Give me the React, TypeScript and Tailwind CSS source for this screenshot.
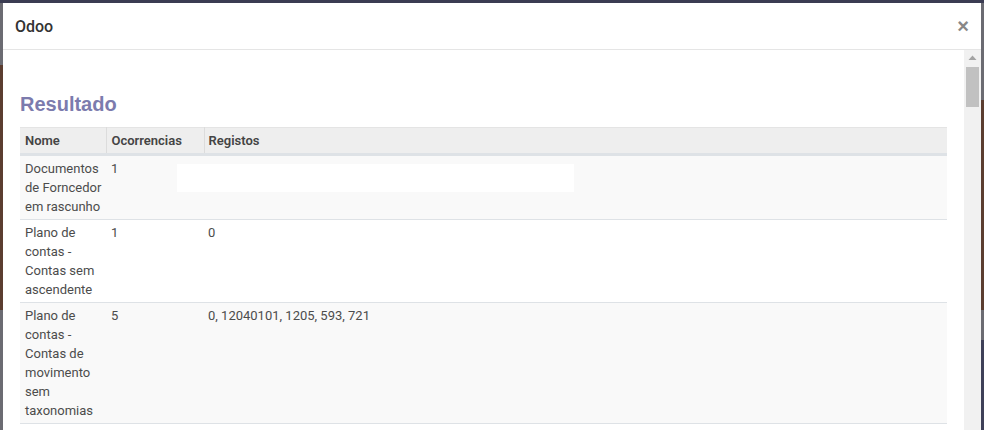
import React from "react";

const rows = [
  { nome: ["Documentos", "de Forncedor", "em rascunho"], oc: "1", reg: "", blank: true },
  { nome: ["Plano de", "contas -", "Contas sem", "ascendente"], oc: "1", reg: "0" },
  { nome: ["Plano de", "contas -", "Contas de", "movimento", "sem", "taxonomias"], oc: "5", reg: "0, 12040101, 1205, 593, 721" },
];

export default function App() {
  return (
    <div className="relative w-[984px] h-[430px] overflow-hidden bg-[#6b6b72]" style={{ fontFamily: "Roboto, 'Liberation Sans', sans-serif" }}>
      {/* backdrop pieces */}
      <div className="absolute left-0 top-0 w-full h-[3px] bg-[#3b3c52]" />
      <div className="absolute left-0 top-[65px] w-[3px] h-[245px] bg-[#5b3d30]" />
      <div className="absolute right-0 top-[100px] w-[3px] h-[210px] bg-[#5b3d30]" />
      <div className="absolute right-0 top-[340px] w-[3px] h-[90px] bg-[#3e4058]" />

      {/* modal */}
      <div className="absolute left-[3px] top-[3px] w-[978px] h-[440px] bg-white flex flex-col">
        <div className="h-[47px] shrink-0 flex items-center justify-between pl-[12px] pr-[12px] border-b border-[#e5e5e5]">
          <span className="text-[16px] font-medium text-[#333] pt-[1px]">Odoo</span>
          <span className="text-[20px] font-bold text-[#888] leading-none" style={{ fontFamily: "'Liberation Sans', sans-serif" }}>×</span>
        </div>
        <div className="flex flex-1 min-h-0">
          <div className="flex-1 pl-[17px] pr-[17px] pt-[42px]">
            <h2 className="text-[20px] font-bold text-[#7c7bad] leading-[24px] mb-[11px]" style={{ fontFamily: "'Liberation Sans', Arial, sans-serif" }}>Resultado</h2>
            <table className="w-full table-fixed border-collapse text-[13px] text-[#4c4c4c]">
              <colgroup>
                <col className="w-[86px]" />
                <col className="w-[98px]" />
                <col />
              </colgroup>
              <thead>
                <tr className="bg-[#eeeeee] border-b-[3px] border-[#dee2e6] border-t border-t-[#e4e4e4]">
                  <th className="text-left font-semibold px-[5px] h-[27px] border-r border-[#dcdcdc] text-[#444]">Nome</th>
                  <th className="text-left font-semibold px-[5px] border-r border-[#dcdcdc] text-[#444]">Ocorrencias</th>
                  <th className="text-left font-semibold px-[4px] text-[#444]">Registos</th>
                </tr>
              </thead>
              <tbody>
                {rows.map((r, i) => (
                  <tr key={i} className={`${i % 2 === 0 ? "bg-[#f9f9f9]" : "bg-white"} border-b border-[#dee2e6] align-top`}>
                    <td className="pl-[5px] pr-0 py-[3px] leading-[19px]">
                      {r.nome.map((l, j) => (
                        <div key={j} className="whitespace-nowrap">{l}</div>
                      ))}
                    </td>
                    <td className="px-[5px] py-[3px] leading-[19px] relative">
                      {r.oc}
                      {r.blank && <div className="absolute left-[71px] top-[8px] w-[397px] h-[28px] bg-white" />}
                    </td>
                    <td className="px-[4px] py-[3px] leading-[19px] whitespace-nowrap">{r.reg}</td>
                  </tr>
                ))}
              </tbody>
            </table>
          </div>
          <div className="w-[17px] shrink-0 bg-[#f1f1f1] flex flex-col items-center pt-[5px]">
            <svg width="9" height="6" viewBox="0 0 9 6"><path d="M4.5 0.5 L8.5 5 L0.5 5 Z" fill="#a3a3a3" /></svg>
            <div className="mt-[6px] w-[13px] h-[40px] bg-[#c1c1c1]" />
          </div>
        </div>
      </div>
    </div>
  );
}
